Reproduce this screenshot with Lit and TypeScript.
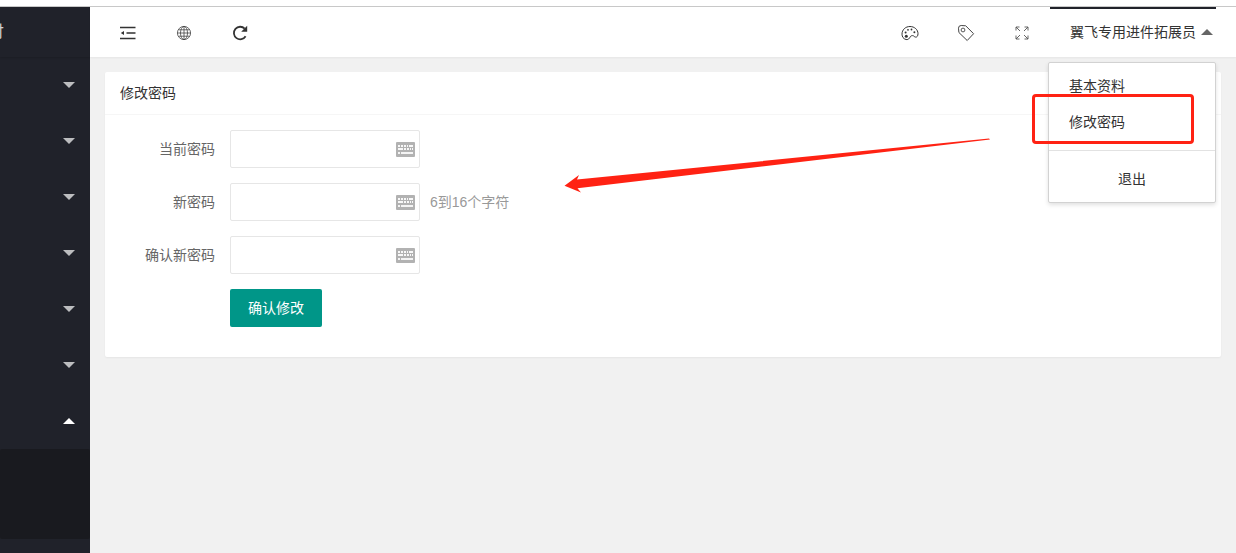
import { LitElement, html, css, svg } from "lit";
import { customElement, state } from "lit/decorators.js";
import { classMap } from "lit/directives/class-map.js";

const keyboardIcon = html`<svg class="kbd" viewBox="0 0 19 15" width="19" height="15" aria-hidden="true">
  <rect width="19" height="15" rx="1" fill="#b2b2b2" />
  <g fill="#fff">
    <path d="M2 3h2v2H2zM5 3h2v2H5zM8 3h2v2H8zM11 3h1v2h-1zM13 3h4v2h-4z" opacity=".9" />
    <path d="M2 6h5v2H2zM8 6h2v2H8zM11 6h2v2h-2zM14 6h1v2h-1zM16 6h1v2h-1z" opacity=".9" />
    <path d="M2 10h2v2H2zM5 10h12v2H5z" opacity=".85" />
  </g>
</svg>`;

const icon = (body: unknown, size = 18) => html`<svg
  viewBox="0 0 18 18"
  width=${size}
  height=${size}
  fill="none"
  stroke="#333"
  aria-hidden="true"
>${body}</svg>`;

const shrinkIcon = icon(svg`
  <path d="M1 3.500h15.500M7.500 9h9M1 14.500h15.500" stroke-width="1.500" />
  <path d="M1.800 9L5 6.900v4.200z" fill="#333" stroke="none" />
`);

const globeIcon = icon(svg`
  <g stroke="#444" stroke-width=".8">
    <circle cx="9" cy="9" r="6.600" />
    <ellipse cx="9" cy="9" rx="3.500" ry="6.600" />
    <path d="M9 2.500v13M2.500 9h13M3.500 5.800h11M3.500 12.200h11" />
  </g>
`);

const refreshIcon = icon(svg`
  <path d="M14.600 12.300A6.300 6.300 0 1 1 13.700 4.600" stroke-width="1.800" />
  <path d="M16.200 1.800v6h-6z" fill="#333" stroke="none" />
`);

const paletteIcon = icon(svg`
  <path d="M5 15.500C2.300 14.900 1 12.600 1 10.200C1 5.700 4.500 2.500 9 2.500s8 3.200 8 7.200c0 2.200-1 3.600-2.400 3.400c-1.500-.2-1.700-1.500-3-1.500c-2.200 0-2.300 1.400-3.200 2.600C7.500 15.400 6.300 15.800 5 15.500z" stroke-width="1" />
  <g fill="#333" stroke="none">
    <circle cx="5.300" cy="12.200" r="1.500" />
    <circle cx="4.600" cy="8.500" r="1" />
    <circle cx="7" cy="5.800" r=".9" />
    <circle cx="10.500" cy="5.500" r=".9" />
    <circle cx="13.400" cy="8.300" r="1" />
  </g>
`);

const tagIcon = icon(svg`
  <path d="M1.500 4.200Q1.500 1.500 4.200 1.500L8.700 1.800L16.600 9.700L10.200 16.500L1.900 8.500z" stroke="#444" stroke-width="1" stroke-linejoin="round" />
  <circle cx="6" cy="6" r="1.900" stroke="#444" stroke-width=".9" />
`);

const fullIcon = icon(svg`
  <path d="M3 6.500V3h3.500M3 3l4 4M11.500 3H15v3.500M15 3l-4 4M3 11.500V15h3.500M3 15l4-4M11.500 15H15v-3.500M15 15l-4-4" stroke="#555" stroke-width=".9" />
`);

@customElement("side-menu")
export class SideMenu extends LitElement {
  @state() private opened = 6;

  static styles = css`
    :host {
      display: block;
      background: #20222a;
      overflow: hidden;
    }
    .logo {
      display: flex;
      justify-content: flex-end;
      align-items: center;
      height: 50px;
      padding-right: 86px;
      box-sizing: border-box;
      font-size: 16px;
      color: rgba(255, 255, 255, 0.8);
      white-space: nowrap;
      box-shadow: 0 1px 2px rgba(0, 0, 0, 0.15);
    }
    .item {
      display: flex;
      justify-content: flex-end;
      align-items: center;
      width: 100%;
      height: 56px;
      padding: 0 15px;
      border: 0;
      background: none;
      cursor: pointer;
    }
    .caret {
      border: 6px solid transparent;
      border-bottom-width: 0;
      border-top-color: rgba(255, 255, 255, 0.7);
    }
    .caret.up {
      border-bottom-width: 6px;
      border-top-width: 0;
      border-bottom-color: #fff;
    }
    .sub {
      height: 90px;
      background: #191a1f;
      border-radius: 2px;
    }
  `;

  render() {
    return html`
      <div class="logo">付</div>
      <nav>
        ${[0, 1, 2, 3, 4, 5, 6, 7].map((i) => {
          const open = this.opened === i;
          return html`
            <button
              class="item"
              type="button"
              aria-expanded=${open}
              @click=${() => (this.opened = open ? -1 : i)}
            >
              <span class=${classMap({ caret: true, up: open })}></span>
            </button>
            ${open ? html`<div class="sub"></div>` : ""}
          `;
        })}
      </nav>
    `;
  }
}

@customElement("top-bar")
export class TopBar extends LitElement {
  @state() private open = true;

  static styles = css`
    :host {
      display: flex;
      justify-content: space-between;
      height: 50px;
      padding: 0 20px 0 10px;
      background: #fff;
      box-shadow: 0 1px 2px rgba(0, 0, 0, 0.05);
      position: relative;
      z-index: 2;
    }
    .group {
      display: flex;
    }
    .tool {
      display: flex;
      align-items: center;
      justify-content: center;
      width: 56px;
      padding: 2px 0 0;
      border: 0;
      background: none;
      cursor: pointer;
    }
    .account {
      position: relative;
    }
    .user {
      display: flex;
      align-items: center;
      gap: 5px;
      height: 50px;
      padding: 0 3px 2px 20px;
      border: 0;
      border-top: 2px solid #20222a;
      box-sizing: border-box;
      background: none;
      font: inherit;
      color: #333;
      cursor: pointer;
      white-space: nowrap;
    }
    .caret {
      border: 6px solid transparent;
      border-top-width: 0;
      border-bottom-color: #666;
    }
    .menu {
      position: absolute;
      right: 0;
      top: 55px;
      min-width: 100%;
      padding: 5px 0;
      border: 1px solid #d2d2d2;
      border-radius: 2px;
      background: #fff;
      box-shadow: 0 2px 4px rgba(0, 0, 0, 0.12);
    }
    .menu a {
      display: block;
      padding: 0 20px;
      line-height: 36px;
      color: #333;
      text-decoration: none;
    }
    .menu hr {
      height: 1px;
      margin: 10px 0;
      border: 0;
      background: #e2e2e2;
    }
    .menu .exit {
      text-align: center;
    }
    .mark {
      position: absolute;
      left: -17px;
      top: 31px;
      width: 162px;
      height: 50px;
      border: 3px solid #ff2213;
      border-radius: 4px;
      box-sizing: border-box;
      pointer-events: none;
    }
  `;

  render() {
    return html`
      <div class="group">
        <button class="tool" type="button" aria-label="侧边伸缩">${shrinkIcon}</button>
        <button class="tool" type="button" aria-label="前台">${globeIcon}</button>
        <button class="tool" type="button" aria-label="刷新">${refreshIcon}</button>
      </div>
      <div class="group">
        <button class="tool" type="button" aria-label="主题">${paletteIcon}</button>
        <button class="tool" type="button" aria-label="便签">${tagIcon}</button>
        <button class="tool" type="button" aria-label="全屏">${fullIcon}</button>
        <div class="account">
          <button class="user" type="button" aria-expanded=${this.open} @click=${() => (this.open = !this.open)}>
            翼飞专用进件拓展员<span class="caret"></span>
          </button>
          ${this.open
            ? html`<div class="menu">
                <a href="#info">基本资料</a>
                <a href="#password">修改密码</a>
                <hr />
                <a class="exit" href="#logout">退出</a>
                <div class="mark"></div>
              </div>`
            : ""}
        </div>
      </div>
    `;
  }
}

@customElement("password-card")
export class PasswordCard extends LitElement {
  static styles = css`
    :host {
      display: block;
      position: relative;
      background: #fff;
      border-radius: 2px;
      box-shadow: 0 1px 2px rgba(0, 0, 0, 0.05);
    }
    h1 {
      margin: 0;
      padding: 0 15px;
      font-size: 14px;
      font-weight: 400;
      line-height: 42px;
      color: #333;
      border-bottom: 1px solid #f6f6f6;
    }
    form {
      display: grid;
      gap: 15px;
      padding: 15px 15px 30px;
    }
    .row {
      display: grid;
      grid-template-columns: 95px 190px 1fr;
      align-items: center;
      column-gap: 15px;
    }
    label {
      text-align: right;
      color: #666;
    }
    .field {
      display: grid;
      grid-template-columns: 1fr;
      align-items: center;
    }
    .field > * {
      grid-area: 1 / 1;
    }
    input {
      width: 100%;
      height: 38px;
      padding: 0 30px 0 10px;
      border: 1px solid #e6e6e6;
      border-radius: 2px;
      box-sizing: border-box;
      font: inherit;
      outline: 0;
    }
    .kbd {
      justify-self: end;
      margin-right: 5px;
      pointer-events: none;
    }
    .hint {
      margin-left: -5px;
      color: #999;
    }
    .submit {
      grid-column: 2;
      justify-self: start;
      height: 38px;
      padding: 0 18px;
      border: 0;
      border-radius: 2px;
      background: #009688;
      color: #fff;
      font: inherit;
      cursor: pointer;
    }
    .pointer {
      position: absolute;
      left: 459px;
      top: 66px;
      pointer-events: none;
    }
  `;

  private rows = [
    { id: "old", label: "当前密码", hint: "" },
    { id: "new", label: "新密码", hint: "6到16个字符" },
    { id: "again", label: "确认新密码", hint: "" },
  ];

  render() {
    return html`
      <h1>修改密码</h1>
      <form @submit=${(e: Event) => e.preventDefault()}>
        ${this.rows.map(
          (r) => html`<div class="row">
            <label for=${r.id}>${r.label}</label>
            <div class="field"><input id=${r.id} type="password" />${keyboardIcon}</div>
            ${r.hint ? html`<span class="hint">${r.hint}</span>` : ""}
          </div>`
        )}
        <div class="row"><button class="submit" type="submit">确认修改</button></div>
      </form>
      <svg class="pointer" width="427" height="56" viewBox="0 0 427 56" aria-hidden="true">
        <path d="M.5 47.700L15 37L13 41.500L425 .5L426 1.500L13.500 50.300L17 54.500z" fill="#ff2213" />
      </svg>
    `;
  }
}

@customElement("app-root")
export class AppRoot extends LitElement {
  static styles = css`
    :host {
      display: grid;
      grid-template-columns: 90px 1fr;
      grid-template-rows: 1px 1fr;
      height: 100vh;
      padding-top: 6px;
      box-sizing: border-box;
      overflow: hidden;
      background: #fff;
      font: 14px/20px "Liberation Sans", "Noto Sans CJK SC", sans-serif;
      color: #333;
    }
    .rule {
      grid-column: 1 / -1;
      background: #c8c8c8;
    }
    side-menu {
      min-height: 0;
    }
    .main {
      min-height: 0;
      background: #f1f1f1;
    }
    main {
      padding: 15px;
    }
  `;

  render() {
    return html`
      <div class="rule"></div>
      <side-menu></side-menu>
      <div class="main">
        <top-bar></top-bar>
        <main><password-card></password-card></main>
      </div>
    `;
  }
}
